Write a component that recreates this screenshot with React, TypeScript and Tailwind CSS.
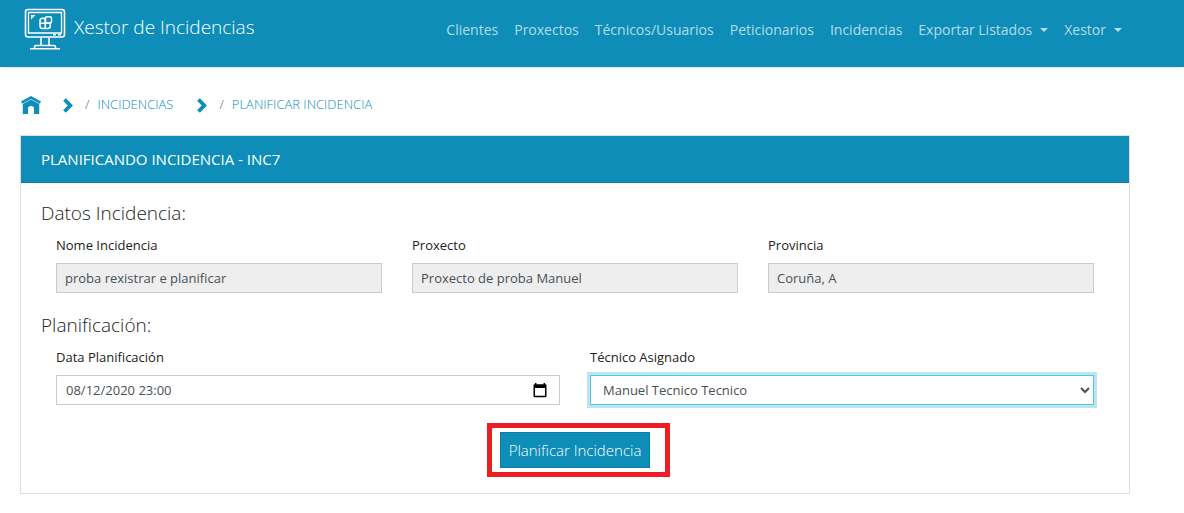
import type { ReactNode } from "react";

const navLinks = ["Clientes", "Proxectos", "Técnicos/Usuarios", "Peticionarios", "Incidencias"];
const navMenus = ["Exportar Listados", "Xestor"];

const incidentFields = [
  { id: "nome", label: "Nome Incidencia", value: "proba rexistrar e planificar" },
  { id: "proxecto", label: "Proxecto", value: "Proxecto de proba Manuel" },
  { id: "provincia", label: "Provincia", value: "Coruña, A" },
];

function MonitorLogo() {
  return (
    <svg width="42" height="42" viewBox="0 0 42 42" fill="none" stroke="white" strokeWidth="1.6" aria-hidden="true">
      <rect x="1.5" y="1.5" width="39" height="27.5" rx="2.5" />
      <path d="M4.5 25V4.5H37.5V25Z" strokeWidth="1.3" />
      <path d="M7 7H11.5L7 11.5Z" fill="white" stroke="none" />
      <path d="M29 26.8H32M34 26.8H37" strokeWidth="1.6" />
      <path d="M17 29.5V37.5M25 29.5V37.5M10.5 40V39Q10.5 37.5 12 37.5H30Q31.5 37.5 31.5 39V40M6 40.8H36" />
      <g strokeWidth="1.5">
        <path d="M21.5 10.2H18.5Q16 10.2 16 12.5V18Q16 20.5 18.5 20.5H24Q26.3 20.5 26.3 18V15.2H16M21.2 10V20.5" />
        <rect x="21.5" y="8.8" width="6" height="6.2" rx="1.5" />
      </g>
    </svg>
  );
}

function HomeIcon() {
  return (
    <svg width="20" height="18" viewBox="0 0 20 18" fill="#0d8db8" aria-hidden="true">
      <path d="M10 0 20 5.6 18.8 7.8 10 2.9 1.2 7.8 0 5.6Z" />
      <path d="M10 3.4 18.2 7.9V18H13V12.5Q13 10 10 10T7 12.5V18H1.8V7.9Z" />
    </svg>
  );
}

function ChevronIcon() {
  return (
    <svg width="10" height="15" viewBox="0 0 10 15" fill="none" stroke="#0d8db8" strokeWidth="3.8" aria-hidden="true">
      <path d="M1.5 1.5 7.3 7.5 1.5 13.5" />
    </svg>
  );
}

function Caret() {
  return <span className="ml-2 h-0 w-0 border-x-4 border-t-4 border-x-transparent border-t-current" />;
}

function CalendarIcon() {
  return (
    <svg width="14" height="15" viewBox="0 0 14 15" fill="black" aria-hidden="true">
      <path fillRule="evenodd" d="M2 0H3.5V1.3H10.5V0H12V1.3H12.5Q13.5 1.3 13.5 2.5V13Q13.5 14.2 12.3 14.2H1.7Q.5 14.2.5 13V2.5Q.5 1.3 1.5 1.3H2ZM2 5V12.8H12V5Z" />
    </svg>
  );
}

function Field({ id, label, children }: { id: string; label: string; children: ReactNode }) {
  return (
    <div className="flex min-w-0 flex-1 flex-col gap-2">
      <label htmlFor={id} className="text-[13px] leading-5 text-[#222222]">
        {label}
      </label>
      {children}
    </div>
  );
}

export default function App() {
  return (
    <div className="font-['Open_Sans',sans-serif] font-light text-[#222222]">
      <header className="flex h-[67px] items-start justify-between bg-[#0d8db8] pr-[54px] pl-6 shadow-sm">
        <a href="#inicio" className="flex items-center gap-2 pt-2 text-white">
          <MonitorLogo />
          <span className="pb-1 text-[19px] leading-7">Xestor de Incidencias</span>
        </a>
        <nav className="flex pt-5 text-sm leading-5 font-normal text-white/70">
          {navLinks.map((name) => (
            <a key={name} href="#" className="px-2">
              {name}
            </a>
          ))}
          {navMenus.map((name) => (
            <button key={name} type="button" className="flex items-center px-2">
              {name}
              <Caret />
            </button>
          ))}
        </nav>
      </header>

      <main className="pt-7 pr-[54px] pb-5 pl-5">
        <nav className="mb-5 flex h-5 items-center text-[13px] text-[#0d8db8]">
          <a href="#inicio" aria-label="Inicio" className="mr-[22px] ml-px">
            <HomeIcon />
          </a>
          <ChevronIcon />
          <span className="mr-2 ml-3 text-[#666666]">/</span>
          <a href="#incidencias" className="mr-6">
            INCIDENCIAS
          </a>
          <ChevronIcon />
          <span className="mr-2 ml-3 text-[#666666]">/</span>
          <a href="#planificar">PLANIFICAR INCIDENCIA</a>
        </nav>

        <section className="border border-[#dddddd]">
          <h1 className="border-b border-[#0b7ea5] bg-[#0d8db8] px-5 py-3 text-[15px] leading-[22px] font-normal text-white">
            PLANIFICANDO INCIDENCIA - INC7
          </h1>
          <form className="px-5 pt-[18px] pb-[25px]" onSubmit={(event) => event.preventDefault()}>
            <h2 className="mb-[10px] text-[19px] leading-6">Datos Incidencia:</h2>
            <div className="mb-5 flex gap-[30px] px-[15px] font-normal">
              {incidentFields.map(({ id, label, value }) => (
                <Field key={id} id={id} label={label}>
                  <input
                    id={id}
                    readOnly
                    defaultValue={value}
                    className="h-[30px] w-full border border-[#cccccc] bg-[#eeeeee] px-2 text-[13px] text-[#495057]"
                  />
                </Field>
              ))}
            </div>
            <h2 className="mb-[10px] text-[19px] leading-6">Planificación:</h2>
            <div className="flex gap-[30px] px-[15px] font-normal">
              <Field id="data" label="Data Planificación">
                <div className="flex h-[30px] items-center border border-[#cccccc] pr-3 pl-[9px]">
                  <input
                    id="data"
                    defaultValue="08/12/2020 23:00"
                    className="h-7 min-w-0 flex-1 text-[13px] text-[#495057] outline-none"
                  />
                  <button type="button" aria-label="Abrir calendario">
                    <CalendarIcon />
                  </button>
                </div>
              </Field>
              <Field id="tecnico" label="Técnico Asignado">
                <select
                  id="tecnico"
                  className="h-[30px] w-full border border-[#46cbf5] bg-white px-2 text-[13px] text-[#495057] ring-3 ring-[#c2e3ed] outline-none"
                >
                  <option>Manuel Tecnico Tecnico</option>
                </select>
              </Field>
            </div>
            <div className="mt-[27px] flex justify-center">
              <div className="relative">
                <button
                  type="submit"
                  className="h-9 border border-[#0b7ea5] bg-[#0d8db8] px-2 text-[15px] leading-5 text-white"
                >
                  Planificar Incidencia
                </button>
                <div className="pointer-events-none absolute -top-[9px] -right-5 -bottom-[9px] -left-[13px] border-5 border-[#ee1c23]" />
              </div>
            </div>
          </form>
        </section>
      </main>
    </div>
  );
}
